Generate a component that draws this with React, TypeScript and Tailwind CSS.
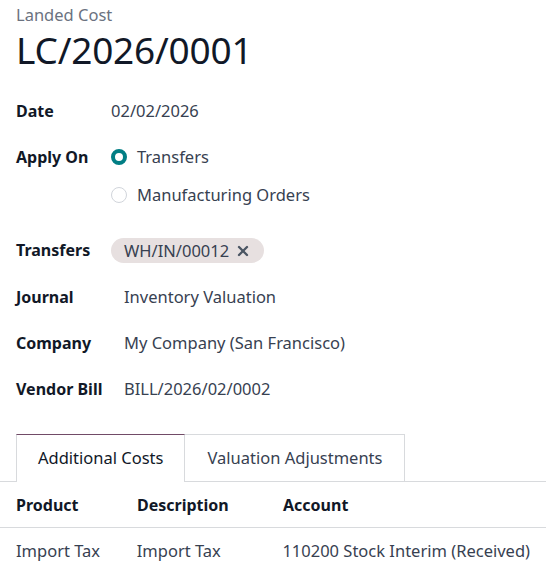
import { X } from 'lucide-react'

function Field({ label, children, className = '' }: { label: string; children: React.ReactNode; className?: string }) {
  return (
    <div className={`flex items-start ${className}`}>
      <div className="w-[95px] shrink-0 font-bold text-[16px] text-[#111827] leading-[24px] whitespace-nowrap">{label}</div>
      <div className="flex-1 text-[#374151] leading-[24px]">{children}</div>
    </div>
  )
}

export default function App() {
  return (
    <div className="w-[546px] h-[571px] overflow-hidden bg-white font-['Noto_Sans',sans-serif] text-[16.5px]">
      <div className="px-4 pt-[3px]">
        <div className="text-[#6b7280] text-[16.5px] leading-[24px]">Landed Cost</div>
        <h1 className="text-[37px] leading-[46px] text-[#111827] -tracking-[0.2px]">LC/2026/0001</h1>

        <div className="mt-[26px]">
          <Field label="Date">02/02/2026</Field>
          <Field label="Apply On" className="mt-[22px]">
            <div className="flex flex-col gap-[14px]">
              <div className="flex items-center gap-[10px]">
                <span className="w-4 h-4 rounded-full border-[4.5px] border-[#017e84] bg-white" />
                <span>Transfers</span>
              </div>
              <div className="flex items-center gap-[10px]">
                <span className="w-4 h-4 rounded-full border border-[#d1d5db] bg-white" />
                <span>Manufacturing Orders</span>
              </div>
            </div>
          </Field>
          <Field label="Transfers" className="mt-[31px]">
            <span className="inline-flex items-center gap-[6px] rounded-full bg-[#e7e0e0] pl-[13px] pr-[13px] h-[25px] text-[#374151]">
              WH/IN/00012
              <X size={16} strokeWidth={3.5} className="text-[#4b5563]" />
            </span>
          </Field>
          <Field label="Journal" className="mt-[22px]"><span className="pl-[13px]">Inventory Valuation</span></Field>
          <Field label="Company" className="mt-[22px]"><span className="pl-[13px]">My Company (San Francisco)</span></Field>
          <Field label="Vendor Bill" className="mt-[22px]"><span className="pl-[13px]">BILL/2026/02/0002</span></Field>
        </div>
      </div>

      <div className="mt-[33px] flex border-b border-[#d8dadd]">
        <div className="w-4 shrink-0" />
        <div className="-mb-px h-[48px] px-[21px] flex items-center border-t border-t-[#714b67] border-x border-x-[#d8dadd] bg-white text-[#111827]">
          Additional Costs
        </div>
        <div className="h-[47px] px-[22px] flex items-center border-t border-r border-[#d8dadd] text-[#374151]">
          Valuation Adjustments
        </div>
      </div>

      <div className="flex h-[46px] items-center px-4 font-bold text-[16px] text-[#111827] border-b border-[#d8dadd]">
        <div className="w-[121px]">Product</div>
        <div className="w-[146px]">Description</div>
        <div>Account</div>
      </div>
      <div className="flex h-[46px] items-center px-4 text-[#374151]">
        <div className="w-[121px]">Import Tax</div>
        <div className="w-[146px]">Import Tax</div>
        <div className="whitespace-nowrap">110200 Stock Interim (Received)</div>
      </div>
    </div>
  )
}
